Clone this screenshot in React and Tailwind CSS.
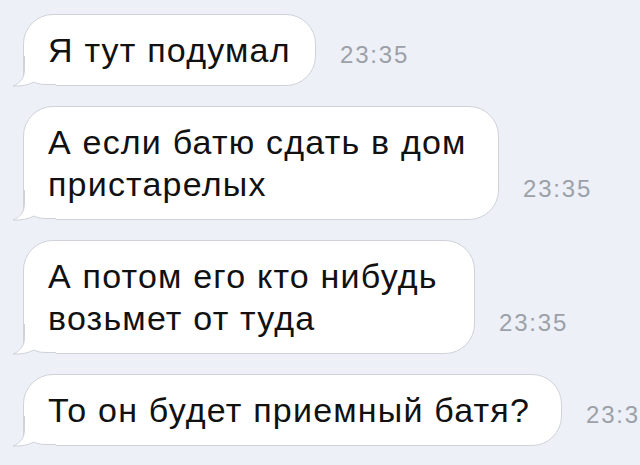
import React from "react";

const BG = "#edf0f7";
const BORDER = "#cfd3d9";

function Tail() {
  return (
    <svg
      className="absolute -left-[12px] -bottom-[3px]"
      width="44"
      height="32"
      viewBox="0 0 44 32"
    >
      <path d="M0 32 L0 30 L1 30 C 9 30.5 16 29 22 26 C 26 28 30 28 36 28 L44 28 L44 32 Z" fill={BG} />
      <path d="M13 0 L13 14 C13 21 8 27 1 30 C 9 30.5 16 29 22 26 C 26 28 30 28 36 28 L44 28 L44 0 Z" fill="#ffffff" />
      <path
        d="M12.5 0 L12.5 14 C12.5 21.5 8 27.5 1 30 C 9 30.5 16 29 22 26 C 26 28.2 30 28.5 36 28.5 L44 28.5"
        fill="none"
        stroke={BORDER}
        strokeWidth="1"
      />
    </svg>
  );
}

function Row({ width, lines }) {
  return (
    <div className="flex items-end">
      <div
        className="relative shrink-0 rounded-[30px] rounded-bl-none border border-[#cfd3d9] bg-white py-[14px] pl-[24px] pr-2 text-[34px] leading-[42px] tracking-[1.2px] text-[#111111]"
        style={{ width }}
      >
        <Tail />
        <div className="relative">
          {lines.map((l, i) => (
            <div key={i} className="whitespace-nowrap">
              {l}
            </div>
          ))}
        </div>
      </div>
      <div className="mb-[17px] ml-[24px] shrink-0 whitespace-nowrap text-[24px] leading-[28px] tracking-[1.8px] text-[#9ca0a8]">
        23:35
      </div>
    </div>
  );
}

export default function App() {
  return (
    <div
      className="flex h-[465px] w-[640px] flex-col gap-[20px] overflow-hidden bg-[#edf0f7] pl-[23px] pt-[14px]"
      style={{ fontFamily: '"Liberation Sans", Arial, sans-serif' }}
    >
      <Row width={293} lines={["Я тут подумал"]} />
      <Row width={476} lines={["А если батю сдать в дом", "пристарелых"]} />
      <Row width={452} lines={["А потом его кто нибудь", "возьмет от туда"]} />
      <Row width={539} lines={["То он будет приемный батя?"]} />
    </div>
  );
}
